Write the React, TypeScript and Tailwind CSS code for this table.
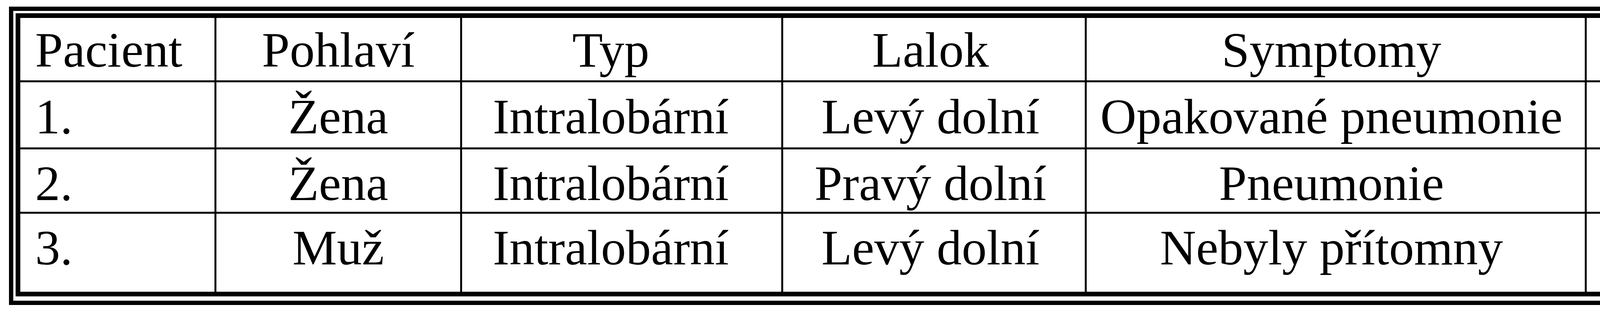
import React from "react";

const rows: string[][] = [
  ["Pacient", "Pohlaví", "Typ", "Lalok", "Symptomy", "Výkon", "Odstup arterie"],
  ["1.", "Žena", "Intralobární", "Levý dolní", "Opakované pneumonie", "Bisegmentektomie IX, X", "Hrudní aorta"],
  ["2.", "Žena", "Intralobární", "Pravý dolní", "Pneumonie", "Atypická resekce", "Břišní aorta"],
  ["3.", "Muž", "Intralobární", "Levý dolní", "Nebyly přítomny", "Bazální segmentektomie VII-X", "Hrudní aorta"],
];

const colClasses = [
  "text-left pl-[38px]",
  "text-center",
  "text-center pr-[56px]",
  "text-center pr-[18px]",
  "text-center pr-[22px]",
  "text-center pr-[24px]",
  "text-center pl-[32px]",
];

const rowClasses = ["pt-[18px]", "pt-[24px]", "pt-[23px]", "pt-[23px]"];

export default function App() {
  return (
    <div className="bg-white w-[6651px] h-[800px] pt-[17px] pl-[23px] font-['Liberation_Serif','Times_New_Roman',serif] text-black">
      <div className="w-[6611px] border-[11px] border-black pt-[6px] pl-[6px] pr-[12px] pb-[11px] box-border">
        <div className="border-[12px] border-r-[11px] border-black">
          <div className="grid grid-cols-[497px_624px_817px_772px_1275px_1732px_801px] grid-rows-[160px_167px_160px_200px] gap-[5px] bg-black">
            {rows.map((row, r) =>
              row.map((cell, c) => (
                <div
                  key={`${r}-${c}`}
                  className={`bg-white whitespace-nowrap text-[128px] leading-[128px] ${colClasses[c]} ${rowClasses[r]}`}
                >
                  {cell}
                </div>
              ))
            )}
          </div>
        </div>
      </div>
    </div>
  );
}
